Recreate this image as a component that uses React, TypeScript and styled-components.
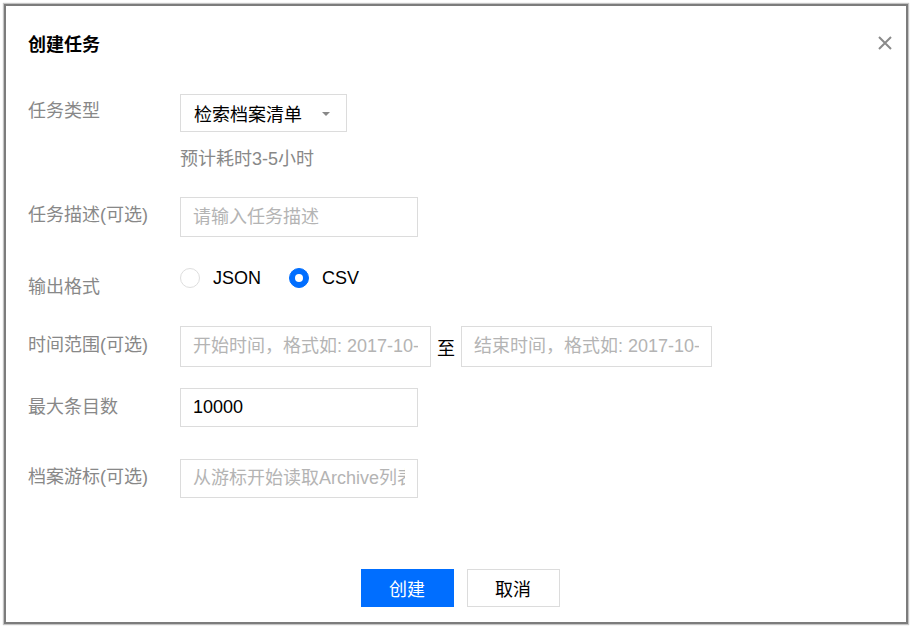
import React from 'react';
import styled, { createGlobalStyle } from 'styled-components';

const GlobalStyle = createGlobalStyle`
    html, body {
        margin: 0;
        padding: 0;
        background: #ffffff;
    }
    body {
        font-family: "Liberation Sans", "Noto Sans CJK SC", sans-serif;
        font-size: 18px;
        color: #000;
    }
    * {
        box-sizing: border-box;
    }
`;

const rows = [
    { label: '任务描述(可选)', top: 26, placeholder: '请输入任务描述' },
];

export default function App() {
    return (
        <>
            <GlobalStyle />
            <Dialog>
                <Header>
                    <Title>创建任务</Title>
                    <Close aria-label="close">
                        <svg width="16" height="16" viewBox="0 0 16 16">
                            <path d="M2 2 L14 14 M14 2 L2 14" stroke="#8a8a8a" strokeWidth="2" fill="none" />
                        </svg>
                    </Close>
                </Header>

                <Body>
                    <Row $top={14}>
                        <Label $offset={5}>任务类型</Label>
                        <Column>
                            <Select>
                                检索档案清单
                                <Caret />
                            </Select>
                            <Hint>预计耗时3-5小时</Hint>
                        </Column>
                    </Row>

                    {rows.map((r) => (
                        <Row key={r.label} $top={r.top}>
                            <Label $offset={6}>{r.label}</Label>
                            <Input placeholder={r.placeholder} />
                        </Row>
                    ))}

                    <Row $top={29}>
                        <Label $offset={9}>输出格式</Label>
                        <RadioGroup>
                            <RadioItem>
                                <RadioDot $checked={false} />
                                JSON
                            </RadioItem>
                            <RadioItem>
                                <RadioDot $checked />
                                CSV
                            </RadioItem>
                        </RadioGroup>
                    </Row>

                    <Row $top={27}>
                        <Label $offset={7}>时间范围(可选)</Label>
                        <RangeBox>
                            <Input $width={251} $height={41} placeholder="开始时间，格式如: 2017-10-01 00:00:00" />
                            <To>至</To>
                            <Input $width={251} $height={41} placeholder="结束时间，格式如: 2017-10-01 00:00:00" />
                        </RangeBox>
                    </Row>

                    <Row $top={21}>
                        <Label $offset={7}>最大条目数</Label>
                        <Input $height={39} defaultValue="10000" />
                    </Row>

                    <Row $top={32}>
                        <Label $offset={6}>档案游标(可选)</Label>
                        <Input $height={39} placeholder="从游标开始读取Archive列表" />
                    </Row>
                </Body>

                <Footer>
                    <Button $primary>创建</Button>
                    <Button>取消</Button>
                </Footer>
            </Dialog>
        </>
    );
}

const Dialog = styled.div`
    margin: 4px;
    width: 904px;
    height: 620px;
    border: 2px solid #7c7c7c;
    box-shadow: 0 0 1px 1px #c4c4c4;
    background: #fff;
    display: flex;
    flex-direction: column;
`;

const Header = styled.div`
    height: 74px;
    display: flex;
    align-items: center;
    justify-content: space-between;
    padding: 0 13px 0 22px;
`;

const Title = styled.div`
    font-weight: bold;
    font-size: 18px;
    color: #000;
`;

const Close = styled.div`
    width: 16px;
    height: 16px;
    display: flex;
    cursor: pointer;
`;

const Body = styled.div`
    padding-left: 22px;
    display: flex;
    flex-direction: column;
`;

const Row = styled.div<{ $top: number }>`
    display: grid;
    grid-template-columns: 152px 1fr;
    align-items: start;
    margin-top: ${(p) => p.$top}px;
`;

const Label = styled.div<{ $offset: number }>`
    margin-top: ${(p) => p.$offset}px;
    line-height: 24px;
    color: #888;
    white-space: nowrap;
`;

const Column = styled.div`
    display: flex;
    flex-direction: column;
    align-items: flex-start;
`;

const Select = styled.div`
    position: relative;
    width: 167px;
    height: 38px;
    border: 1px solid #dcdcdc;
    padding-left: 13px;
    display: flex;
    align-items: center;
    color: #000;
    cursor: pointer;
`;

const Caret = styled.span`
    position: absolute;
    right: 16px;
    top: 17px;
    width: 0;
    height: 0;
    border-left: 4px solid transparent;
    border-right: 4px solid transparent;
    border-top: 4px solid #888;
`;

const Hint = styled.div`
    margin-top: 15px;
    line-height: 24px;
    color: #888;
`;

const Input = styled.input<{ $width?: number; $height?: number }>`
    width: ${(p) => p.$width ?? 238}px;
    height: ${(p) => p.$height ?? 40}px;
    border: 1px solid #dcdcdc;
    padding: 0 12px;
    font-family: "Liberation Sans", "Noto Sans CJK SC", sans-serif;
    font-size: 18px;
    color: #000;
    outline: none;
    background: #fff;
    &::placeholder {
        color: #b4b4b4;
    }
`;

const RadioGroup = styled.div`
    display: flex;
    align-items: center;
    height: 24px;
    gap: 28px;
`;

const RadioItem = styled.label`
    display: flex;
    align-items: center;
    gap: 13px;
    color: #000;
    cursor: pointer;
`;

const RadioDot = styled.span<{ $checked: boolean }>`
    width: 20px;
    height: 20px;
    border-radius: 50%;
    display: flex;
    align-items: center;
    justify-content: center;
    border: 1px solid ${(p) => (p.$checked ? '#006eff' : '#dedede')};
    background: ${(p) => (p.$checked ? '#006eff' : '#fff')};
    &::after {
        content: '';
        width: 8px;
        height: 8px;
        border-radius: 50%;
        background: #fff;
        display: ${(p) => (p.$checked ? 'block' : 'none')};
    }
`;

const RangeBox = styled.div`
    display: flex;
    align-items: center;
`;

const To = styled.span`
    margin: 0 6px;
    color: #000;
`;

const Footer = styled.div`
    margin-top: 71px;
    display: flex;
    justify-content: center;
    gap: 13px;
    padding-left: 8px;
`;

const Button = styled.button<{ $primary?: boolean }>`
    width: 93px;
    height: 38px;
    font-family: "Liberation Sans", "Noto Sans CJK SC", sans-serif;
    font-size: 18px;
    border: 1px solid ${(p) => (p.$primary ? '#006eff' : '#dcdcdc')};
    background: ${(p) => (p.$primary ? '#006eff' : '#fff')};
    color: ${(p) => (p.$primary ? '#fff' : '#000')};
    cursor: pointer;
`;
